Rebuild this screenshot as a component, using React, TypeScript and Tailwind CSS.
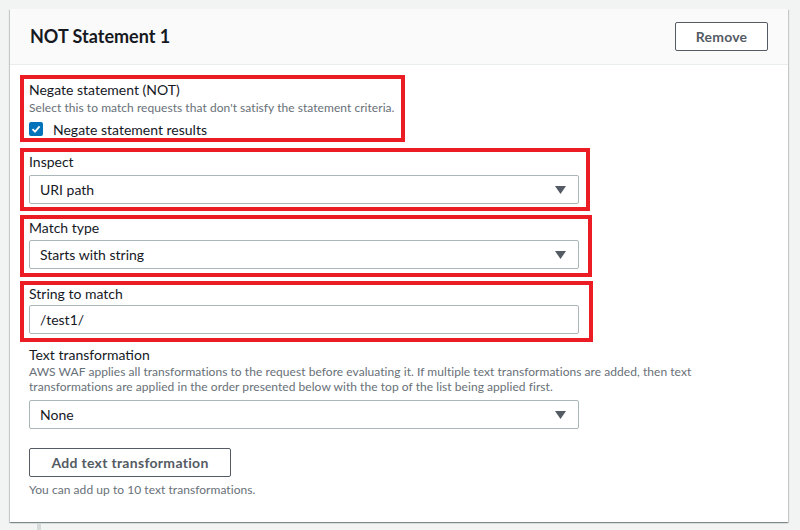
import React from "react";

const font = { fontFamily: "Lato, 'Liberation Sans', Arial, sans-serif" };

function Arrow() {
  return (
    <svg width="11" height="8" viewBox="0 0 11 8" className="shrink-0">
      <path d="M0 0 H11 L5.5 8 Z" fill="#545b64" />
    </svg>
  );
}

function Select({ value }: { value: string }) {
  return (
    <div className="flex h-[29px] w-[550px] items-center justify-between rounded-[2px] border border-[#aab7b8] bg-white pl-[10px] pr-[12px] text-[14px] text-[#16191f]">
      <span>{value}</span>
      <Arrow />
    </div>
  );
}

export default function App() {
  return (
    <div className="h-[530px] w-[800px] overflow-hidden bg-[#f2f3f3] pl-[10px] pt-[9px]" style={font}>
      <div className="w-[778px] bg-white shadow-[0_1px_1px_0_rgba(0,28,36,0.3),1px_1px_1px_0_rgba(0,28,36,0.15),-1px_1px_1px_0_rgba(0,28,36,0.15)]">
        <div className="flex h-[56px] items-center justify-between border-b border-[#eaeded] bg-[#fafafa] pl-[20px] pr-[20px]">
          <div className="text-[18px] font-bold text-[#16191f]">NOT Statement 1</div>
          <button className="flex h-[29px] w-[93px] items-center justify-center rounded-[2px] border border-[#545b64] bg-white text-[14px] font-bold tracking-[0.2px] text-[#545b64]">
            Remove
          </button>
        </div>
        <div className="pb-[24px] pl-[10px] pt-[10px] text-[#16191f]">
          <div className="h-[67px] w-[385px] border-4 border-[#ec1c24] pl-[5px] pt-[1px]">
            <div className="text-[14px] leading-[20px]">Negate statement (NOT)</div>
            <div className="text-[12px] leading-[16px] tracking-[0.05px] text-[#687078]">
              Select this to match requests that don't satisfy the statement criteria.
            </div>
            <div className="mt-[3px] flex h-[20px] items-center gap-[10px]">
              <div className="flex h-[14px] w-[14px] items-center justify-center rounded-[2px] bg-[#0073bb]">
                <svg width="10" height="10" viewBox="0 0 10 10">
                  <path d="M1.5 5.2 L4 7.6 L8.6 2.4" stroke="white" strokeWidth="1.8" fill="none" />
                </svg>
              </div>
              <span className="text-[14px]">Negate statement results</span>
            </div>
          </div>
          <div className="mt-[6px] h-[63px] w-[570px] border-4 border-[#ec1c24] pl-[5px]">
            <div className="text-[14px] leading-[20px]">Inspect</div>
            <div className="mt-[3px]">
              <Select value="URI path" />
            </div>
          </div>
          <div className="mt-[4px] h-[62px] w-[572px] border-4 border-[#ec1c24] pl-[5px]">
            <div className="text-[14px] leading-[18px]">Match type</div>
            <div className="mt-[3px]">
              <Select value="Starts with string" />
            </div>
          </div>
          <div className="mt-[4px] h-[61px] w-[573px] border-4 border-[#ec1c24] pl-[5px]">
            <div className="text-[14px] leading-[18px]">String to match</div>
            <div className="mt-[2px] flex h-[29px] w-[550px] items-center rounded-[2px] border border-[#aab7b8] bg-white pl-[10px] text-[14px]">
              /test1/
            </div>
          </div>
          <div className="pl-[9px]">
            <div className="mt-[4px] text-[14px] leading-[18px]">Text transformation</div>
            <div className="text-[12px] leading-[15px] tracking-[0.05px] text-[#687078]">
              AWS WAF applies all transformations to the request before evaluating it. If multiple text transformations are added, then text
              <br />
              transformations are applied in the order presented below with the top of the list being applied first.
            </div>
            <div className="mt-[6px]">
              <Select value="None" />
            </div>
            <button className="mt-[19px] flex h-[29px] w-[202px] items-center justify-center rounded-[2px] border border-[#545b64] bg-white text-[14px] font-bold tracking-[0.3px] text-[#545b64]">
              Add text transformation
            </button>
            <div className="mt-[5px] text-[12px] leading-[16px] tracking-[0.05px] text-[#687078]">
              You can add up to 10 text transformations.
            </div>
          </div>
        </div>
      </div>
      <div className="ml-[27px] mt-[1px] h-[20px] w-[4px] bg-[#d5dbdb]" />
    </div>
  );
}
